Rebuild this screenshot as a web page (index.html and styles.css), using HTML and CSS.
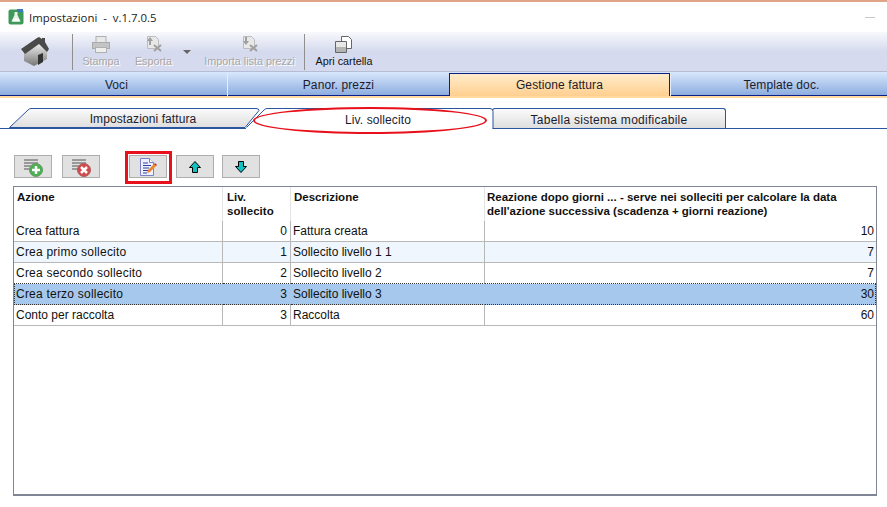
FILE: index.html
```html
<!DOCTYPE html>
<html lang="it">
<head>
  <meta charset="UTF-8">
  <title>Impostazioni - v.1.7.0.5</title>
  <link rel="stylesheet" href="styles.css">
</head>
<body>
  <div id="window">
    <div class="titlebar">
      <svg class="app-icon" width="16" height="16" viewBox="0 0 16 16">
        <rect x="0.5" y="0.5" width="15" height="15" rx="2" fill="#3f9a5a"/>
        <rect x="9" y="0" width="6" height="3" fill="#3f78b8"/>
        <path d="M6.5 3h3v3l3 6.5h-9l3-6.5z" fill="#e8f4e8"/>
        <path d="M5 10h6l1 2.5H4z" fill="#fff"/>
      </svg>
      <span class="title-text">Impostazioni &nbsp;-&nbsp; v.1.7.0.5</span>
      <span class="minimize"></span>
    </div>

    <div class="toolbar">
      <div class="tool home">
        <svg width="30" height="30" viewBox="0 0 30 30">
          <defs>
            <linearGradient id="wall" x1="0" y1="0" x2="0" y2="1">
              <stop offset="0" stop-color="#f0f0f0"/>
              <stop offset="1" stop-color="#777"/>
            </linearGradient>
          </defs>
          <path d="M4 16L19 7l8 8v8l-13 7-10-5z" fill="url(#wall)"/>
          <path d="M18 19l5-2v9l-5 3z" fill="#333"/>
          <path d="M1 13L17 2l2-1 3 2V2h3v4l4 7-2 3-8-8L5 18z" fill="#4a4a4a"/>
        </svg>
      </div>
      <span class="sep"></span>
      <div class="tool disabled stampa">
        <svg width="18" height="17" viewBox="0 0 18 17">
          <rect x="4" y="0.5" width="10" height="6" fill="#e8e8e8" stroke="#b0b0b0"/>
          <rect x="0.5" y="6.5" width="17" height="6" fill="#c4c4c4" stroke="#aaa"/>
          <rect x="3.5" y="11.5" width="11" height="5" fill="#eee" stroke="#b0b0b0"/>
        </svg>
        <span>Stampa</span>
      </div>
      <div class="tool disabled esporta">
        <svg width="18" height="17" viewBox="0 0 18 17">
          <path d="M2.5 0.5h8l3 3v9h-11z" fill="#e8e8e8" stroke="#bcbcbc"/>
          <path d="M5 1l3 4H6v4H4V5H2z" fill="#a0a0a0"/>
          <path d="M9 9l7 6M16 9l-7 6" stroke="#a0a0a0" stroke-width="2"/>
        </svg>
        <span>Esporta</span>
      </div>
      <span class="drop-arrow"></span>
      <div class="tool disabled importa">
        <svg width="18" height="17" viewBox="0 0 18 17">
          <path d="M2.5 0.5h8l3 3v9h-11z" fill="#e8e8e8" stroke="#bcbcbc"/>
          <path d="M5 9L2 5h2V1h2v4h2z" fill="#a0a0a0"/>
          <path d="M9 9l7 6M16 9l-7 6" stroke="#a0a0a0" stroke-width="2"/>
        </svg>
        <span>Importa lista prezzi</span>
      </div>
      <span class="sep sep-second"></span>
      <div class="tool apri">
        <svg width="18" height="17" viewBox="0 0 18 17">
          <path d="M6.500 0.500h7l3 3v9h-10z" fill="#fff" stroke="#666"/>
          <path d="M0.500 5.500h11v11h-11z" fill="#e8e8e8" stroke="#666"/>
          <path d="M1 11h10v5H1z" fill="#b4b4b4"/>
        </svg>
        <span>Apri cartella</span>
      </div>
    </div>

    <div class="maintabs">
      <div class="maintab">Voci</div>
      <div class="maintab">Panor. prezzi</div>
      <div class="maintab active">Gestione fattura</div>
      <div class="maintab">Template doc.</div>
    </div>

    <div class="subtabs">
      <div class="subtab first">
        <svg width="254" height="20" viewBox="0 0 254 20">
          <defs>
            <linearGradient id="tabfill" x1="0" y1="0" x2="0" y2="1">
              <stop offset="0" stop-color="#fbfbfb"/>
              <stop offset="1" stop-color="#dedede"/>
            </linearGradient>
          </defs>
          <path d="M3.500 19.500L22 2q1.500-1.500 3-1.500H250q3 0 3 2L239 19.500z" fill="url(#tabfill)" stroke="#2a55a0"/>
        </svg>
        <span>Impostazioni fattura</span>
      </div>
      <div class="subtab second">
        <svg width="249" height="21" viewBox="0 0 249 21">
          <path d="M0.500 20.500L19 2q1.500-1.500 3-1.500H245q3 0 3 3V20.500" fill="#fff" stroke="#2a55a0"/>
          <path d="M1 20.500H247" stroke="#fff" stroke-width="2"/>
        </svg>
        <span>Liv. sollecito</span>
      </div>
      <div class="subtab third">
        <span>Tabella sistema modificabile</span>
      </div>
      <div class="red-ellipse"></div>
    </div>

    <div class="actions">
      <button class="action add">
        <svg width="28" height="20" viewBox="0 0 28 20">
          <path d="M5 3h14M5 6h14M5 9h8M5 12h8" stroke="#9a9a9a" stroke-width="2"/>
          <circle cx="17" cy="13" r="6.500" fill="#4caf50" stroke="#6a9a6a"/>
          <path d="M17 9v8M13 13h8" stroke="#fff" stroke-width="2.500"/>
        </svg>
      </button>
      <button class="action del">
        <svg width="28" height="20" viewBox="0 0 28 20">
          <path d="M5 3h14M5 6h14M5 9h8M5 12h8" stroke="#9a9a9a" stroke-width="2"/>
          <circle cx="17" cy="13" r="6.500" fill="#d84848" stroke="#a86060"/>
          <path d="M14 10l6 6M20 10l-6 6" stroke="#fff" stroke-width="2.500"/>
        </svg>
      </button>
      <div class="edit-mark">
        <button class="action edit">
          <svg width="18" height="18" viewBox="0 0 18 18">
            <path d="M1.500 0.500h9l4 4v13h-13z" fill="#eef0ff" stroke="#7a80c8"/>
            <path d="M10.500 0.500v4h4" fill="#fff" stroke="#7a80c8"/>
            <path d="M4 5h5M4 7.500h8M4 10h6M4 12.500h5M4 15h4" stroke="#3040a0"/>
            <path d="M8 15l1-3 6-6 2 2-6 6z" fill="#e8862a"/>
            <path d="M15 6l1-1 2 2-1 1z" fill="#c83020"/>
          </svg>
        </button>
      </div>
      <button class="action up">
        <svg width="14" height="14" viewBox="0 0 14 14">
          <path d="M7 1.500l5.500 6H9.500v5h-5v-5H1.500z" fill="#12c0c0" stroke="#000"/>
        </svg>
      </button>
      <button class="action">
        <svg width="14" height="14" viewBox="0 0 14 14">
          <path d="M7 12.500l5.500-6H9.500v-5h-5v5H1.500z" fill="#12c0c0" stroke="#000"/>
        </svg>
      </button>
    </div>

    <div class="grid-box">
      <table class="grid">
        <colgroup>
          <col class="col-azione">
          <col class="col-liv">
          <col class="col-descr">
          <col>
        </colgroup>
        <thead>
          <tr>
            <th>Azione</th>
            <th>Liv. sollecito</th>
            <th>Descrizione</th>
            <th>Reazione dopo giorni ... - serve nei solleciti per calcolare la data dell'azione successiva (scadenza + giorni reazione)</th>
          </tr>
        </thead>
        <tbody>
          <tr>
            <td>Crea fattura</td><td class="num">0</td><td>Fattura creata</td><td class="num">10</td>
          </tr>
          <tr class="alt">
            <td class="wide">Crea primo sollecito</td><td class="num">1</td><td>Sollecito livello 1 1</td><td class="num">7</td>
          </tr>
          <tr class="before-selected">
            <td class="wide">Crea secondo sollecito</td><td class="num">2</td><td>Sollecito livello 2</td><td class="num">7</td>
          </tr>
          <tr class="selected">
            <td class="wide">Crea terzo sollecito</td><td class="num">3</td><td>Sollecito livello 3</td><td class="num">30</td>
          </tr>
          <tr>
            <td>Conto per raccolta</td><td class="num">3</td><td>Raccolta</td><td class="num">60</td>
          </tr>
        </tbody>
      </table>
    </div>
  </div>
</body>
</html>
```

FILE: styles.css
```css
html, body {
  margin: 0;
  height: 100%;
  background: #fff;
  overflow: hidden;
}
body {
  font-family: "Liberation Sans", Arial, sans-serif;
  font-size: 12px;
  color: #111;
}
#window {
  width: 887px;
  height: 507px;
  overflow: hidden;
  border-top: 2px solid #e0a586;
  box-sizing: border-box;
}

.titlebar {
  display: flex;
  align-items: center;
  height: 30px;
  padding-left: 8px;
}
.app-icon {
  margin-right: 5px;
}
.title-text {
  font-family: "Open Sans", sans-serif;
  font-size: 11.4px;
  color: #222;
}
.minimize {
  width: 10px;
  height: 1px;
  margin-left: auto;
  margin-right: 12px;
  background: #c8c8c8;
}

.toolbar {
  display: flex;
  align-items: stretch;
  height: 39px;
  border-bottom: 1px solid #b4bdd4;
  background: linear-gradient(#f8f9fc, #d5daee 50%, #d5daee);
}
.tool {
  display: flex;
  flex-direction: column;
  align-items: center;
  padding-top: 4px;
  font-size: 10.8px;
  line-height: 13px;
}
.tool svg {
  margin-bottom: 2px;
}
.tool.disabled span {
  color: #a8a8a8;
  text-shadow: 1px 1px 0 #fff;
}
.home {
  width: 30px;
  margin-left: 20px;
}
.sep {
  width: 1px;
  margin: 2px 0 1px 22px;
  background: #8f8f8f;
}
.stampa {
  width: 36px;
  margin-left: 10px;
}
.esporta {
  width: 37px;
  margin-left: 16px;
}
.drop-arrow {
  width: 0;
  height: 0;
  margin: 18px 0 0 11px;
  border-left: 4px solid transparent;
  border-right: 4px solid transparent;
  border-top: 4px solid #666;
}
.importa {
  width: 91px;
  margin-left: 13px;
  white-space: nowrap;
}
.sep-second {
  margin-left: 9px;
}
.apri {
  width: 58px;
  margin-left: 10px;
  white-space: nowrap;
}

.maintabs {
  display: grid;
  grid-template-columns: repeat(4, 221.5px);
  height: 24px;
  padding-left: 5.7px;
  border-bottom: 2px solid #ffd9a0;
  background: linear-gradient(#d8e8fc, #8aaade);
  box-shadow: inset 0 -1px 0 #0a1f8a;
}
.maintab {
  display: flex;
  justify-content: center;
  align-items: center;
  height: 23px;
  margin-top: 1px;
  border-left: 1px solid #e4eefc;
  color: #1c1c2c;
  letter-spacing: 0.1px;
  box-sizing: border-box;
}
.maintab:first-child {
  border-left: none;
}
.maintab.active {
  border: 1px solid #0a1f8a;
  border-bottom: none;
  background: linear-gradient(#ffeccc, #ffcf8e);
}

.subtabs {
  position: relative;
  display: flex;
  height: 20px;
  margin-top: 10px;
  padding-left: 6px;
  border-bottom: 1px solid #2a55a0;
}
.subtab {
  position: relative;
  display: flex;
  justify-content: center;
  align-items: center;
  height: 20px;
  padding-top: 2px;
  color: #1c1c2c;
  letter-spacing: 0.1px;
  box-sizing: border-box;
}
.subtab svg {
  position: absolute;
  left: 0;
  top: 0;
}
.subtab span {
  position: relative;
}
.first {
  width: 254px;
  padding-left: 24px;
  padding-right: 4px;
}
.second {
  z-index: 1;
  width: 249px;
  margin-left: -15px;
  padding-left: 17px;
  padding-top: 3px;
}
.third {
  width: 234px;
  margin-left: -2px;
  border: 1px solid #2a55a0;
  border-bottom: none;
  border-radius: 3px 3px 0 0;
  background: linear-gradient(#fbfbfb, #dedede);
  letter-spacing: 0.27px;
}
.red-ellipse {
  position: absolute;
  z-index: 2;
  left: 253px;
  top: -1px;
  width: 234px;
  height: 27px;
  border: 2px solid #e8101a;
  border-radius: 50%;
  box-sizing: border-box;
}

.actions {
  display: flex;
  align-items: flex-start;
  height: 23px;
  margin: 26px 0 0 14px;
}
.action {
  display: flex;
  justify-content: center;
  align-items: center;
  width: 38px;
  height: 23px;
  padding: 0;
  border: 1px solid #aeaeae;
  background: #e1e1e1;
  box-sizing: border-box;
}
.add {
  margin-right: 10px;
}
.del {
  margin-right: 25px;
}
.edit-mark {
  flex: none;
  margin-top: -4px;
  padding: 1px 2px 3px 1px;
  border: 3px solid #e8101a;
}
.up {
  margin: 0 8px 0 4px;
}

.grid-box {
  height: 310px;
  margin: 8px 10px 0 13px;
  border: 1px solid #7f8594;
  border-bottom-width: 2px;
  box-sizing: border-box;
}
.grid {
  width: 100%;
  border-collapse: separate;
  border-spacing: 0;
  table-layout: fixed;
}
.col-azione {
  width: 209px;
}
.col-liv {
  width: 68px;
}
.col-descr {
  width: 194px;
}
.grid th {
  height: 34px;
  padding: 3px 3px 1px;
  border-right: 1px solid #e4e4e4;
  font-size: 11.5px;
  line-height: 14px;
  font-weight: bold;
  text-align: left;
  vertical-align: top;
  box-sizing: border-box;
}
.grid th:nth-child(2) {
  padding-left: 4px;
}
.grid th:nth-child(4) {
  padding-left: 2px;
}
.grid th:last-child {
  border-right: none;
}
.grid td {
  height: 21px;
  padding: 0 2px 1px;
  border-right: 1px solid #b8b8b8;
  border-bottom: 1px solid #b8b8b8;
  white-space: nowrap;
  box-sizing: border-box;
}
.grid td:last-child {
  border-right: none;
}
.grid td.num {
  padding-right: 3px;
  text-align: right;
}
.grid td.num:last-child {
  padding-right: 2px;
}
.grid td.wide {
  letter-spacing: 0.22px;
}
.grid .alt td {
  background: #eff6fe;
}
.grid .before-selected td {
  border-bottom: 1px dotted #333;
}
.grid .selected td {
  background: #a6c8ec;
  border-right-color: #a6c8ec;
  border-bottom: 1px dotted #333;
}
.grid .selected td:first-child {
  padding-left: 1px;
  border-left: 1px dotted #333;
}
.grid .selected td:last-child {
  padding-right: 1px;
  border-right: 1px dotted #333;
}
```
